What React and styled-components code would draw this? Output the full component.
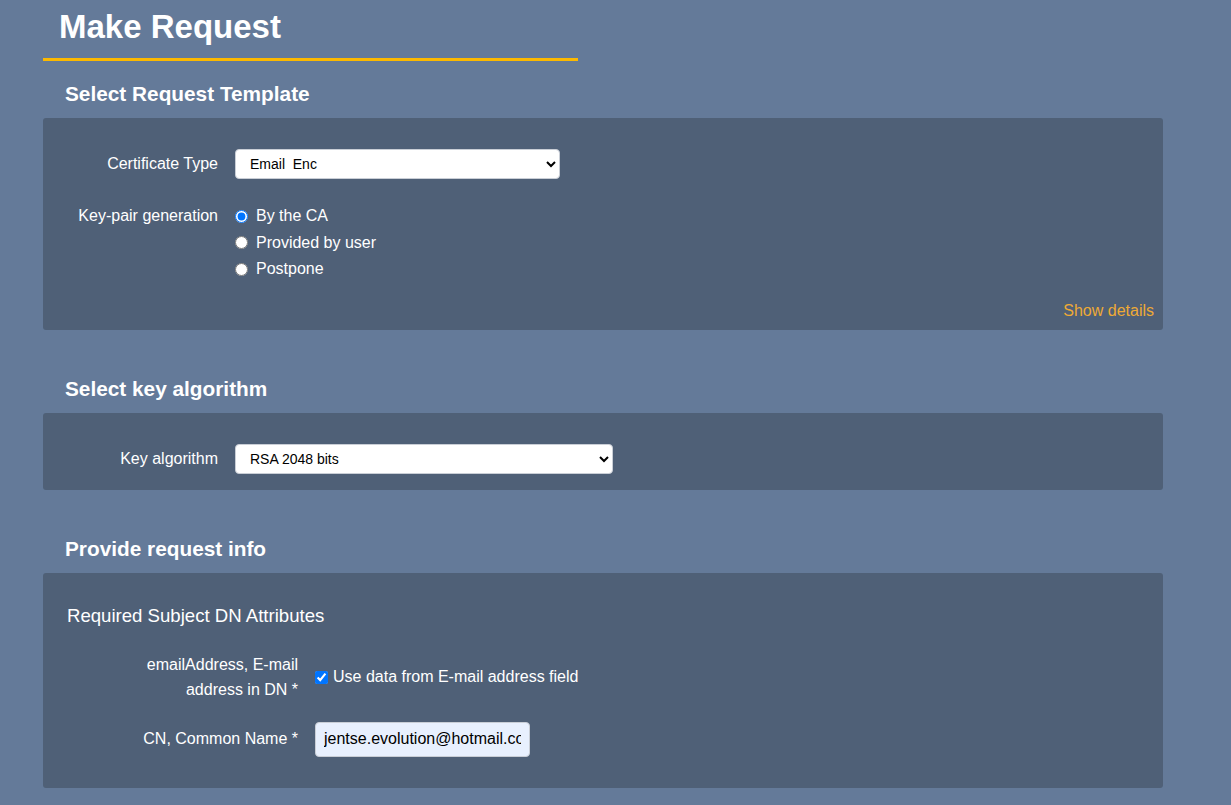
import { createGlobalStyle, styled } from 'styled-components'

const GlobalStyle = createGlobalStyle`
    body {
        margin: 0;
        background: #647a99;
        font-family: 'Liberation Sans', Arial, sans-serif;
        color: #fff;
    }
`;

export default function App() {
    return (
        <Page>
            <GlobalStyle />
            <Title>Make Request</Title>

            <SectionTitle>Select Request Template</SectionTitle>
            <Panel $padding='31px 9px 10px 0'>
                <Row $align='center'>
                    <Label $width={175}>Certificate Type</Label>
                    <Select $width={325} defaultValue='email'>
                        <option value='email'>Email&nbsp;&nbsp;Enc</option>
                    </Select>
                </Row>
                <Row $align='flex-start' $top={24}>
                    <Label $width={175} $lh={25}>Key-pair generation</Label>
                    <RadioList>
                        <RadioItem><input type='radio' name='kp' defaultChecked />By the CA</RadioItem>
                        <RadioItem><input type='radio' name='kp' />Provided by user</RadioItem>
                        <RadioItem><input type='radio' name='kp' />Postpone</RadioItem>
                    </RadioList>
                </Row>
                <Details>Show details</Details>
            </Panel>

            <SectionTitle>Select key algorithm</SectionTitle>
            <Panel $padding='31px 9px 16px 0'>
                <Row $align='center'>
                    <Label $width={175}>Key algorithm</Label>
                    <Select $width={378} defaultValue='rsa2048'>
                        <option value='rsa2048'>RSA 2048 bits</option>
                    </Select>
                </Row>
            </Panel>

            <SectionTitle>Provide request info</SectionTitle>
            <Panel $padding='32px 9px 31px 24px'>
                <SubTitle>Required Subject DN Attributes</SubTitle>
                <Row $align='center' $top={26} $indent={66}>
                    <Label $width={165} $lh={25}>emailAddress, E-mail address in DN *</Label>
                    <CheckLabel><input type='checkbox' defaultChecked />Use data from E-mail address field</CheckLabel>
                </Row>
                <Row $align='center' $top={20} $indent={66}>
                    <Label $width={165}>CN, Common Name *</Label>
                    <TextInput defaultValue='jentse.evolution@hotmail.com' />
                </Row>
            </Panel>
        </Page>
    )
}

const Page = styled.div`
    padding: 8px 0 20px 43px;
    width: 1120px;
`;
const Title = styled.h1`
    margin: 0;
    width: 519px;
    padding: 0 0 12px 16px;
    border-bottom: 3px solid #fcb900;
    font-size: 33px;
    line-height: 38px;
    font-weight: 700;
`;
const SectionTitle = styled.h2`
    margin: 21px 0 12px 22px;
    font-size: 20.8px;
    line-height: 24px;
    font-weight: 700;
`;
const Panel = styled.div`
    background: #4f6077;
    border-radius: 3px;
    padding: ${props => props.$padding};
    & + ${SectionTitle} {
        margin-top: 47px;
    }
`;
const Row = styled.div`
    display: flex;
    align-items: ${props => props.$align};
    gap: 17px;
    margin-top: ${props => props.$top || 0}px;
    padding-left: ${props => props.$indent || 0}px;
`;
const Label = styled.div`
    width: ${props => props.$width}px;
    flex-shrink: 0;
    text-align: right;
    font-size: 16px;
    line-height: ${props => props.$lh ? props.$lh + 'px' : 'normal'};
`;
const Select = styled.select`
    width: ${props => props.$width}px;
    height: 30px;
    padding: 0 6px 0 10px;
    border: 1px solid #c9ced6;
    border-radius: 4px;
    background: #fff;
    color: #000;
    font-family: 'Liberation Sans', Arial, sans-serif;
    font-size: 14px;
`;
const RadioList = styled.div`
    display: flex;
    flex-direction: column;
`;
const RadioItem = styled.label`
    display: flex;
    align-items: center;
    height: 26.5px;
    font-size: 16px;
    input {
        width: 13px;
        height: 13px;
        margin: 0 8px 0 0;
    }
`;
const Details = styled.div`
    margin-top: 18px;
    text-align: right;
    color: #eeaa35;
    font-size: 16px;
    line-height: 19px;
`;
const SubTitle = styled.div`
    font-size: 18.6px;
    line-height: 21px;
`;
const CheckLabel = styled.label`
    display: flex;
    align-items: center;
    font-size: 16px;
    input {
        width: 13px;
        height: 13px;
        margin: 1px 5px 0 0;
    }
`;
const TextInput = styled.input`
    width: 215px;
    height: 35px;
    box-sizing: border-box;
    padding: 0 8px;
    border: 1px solid #c9ced6;
    border-radius: 4px;
    background: #e8f0fe;
    color: #000;
    font-family: 'Liberation Sans', Arial, sans-serif;
    font-size: 16px;
`;
